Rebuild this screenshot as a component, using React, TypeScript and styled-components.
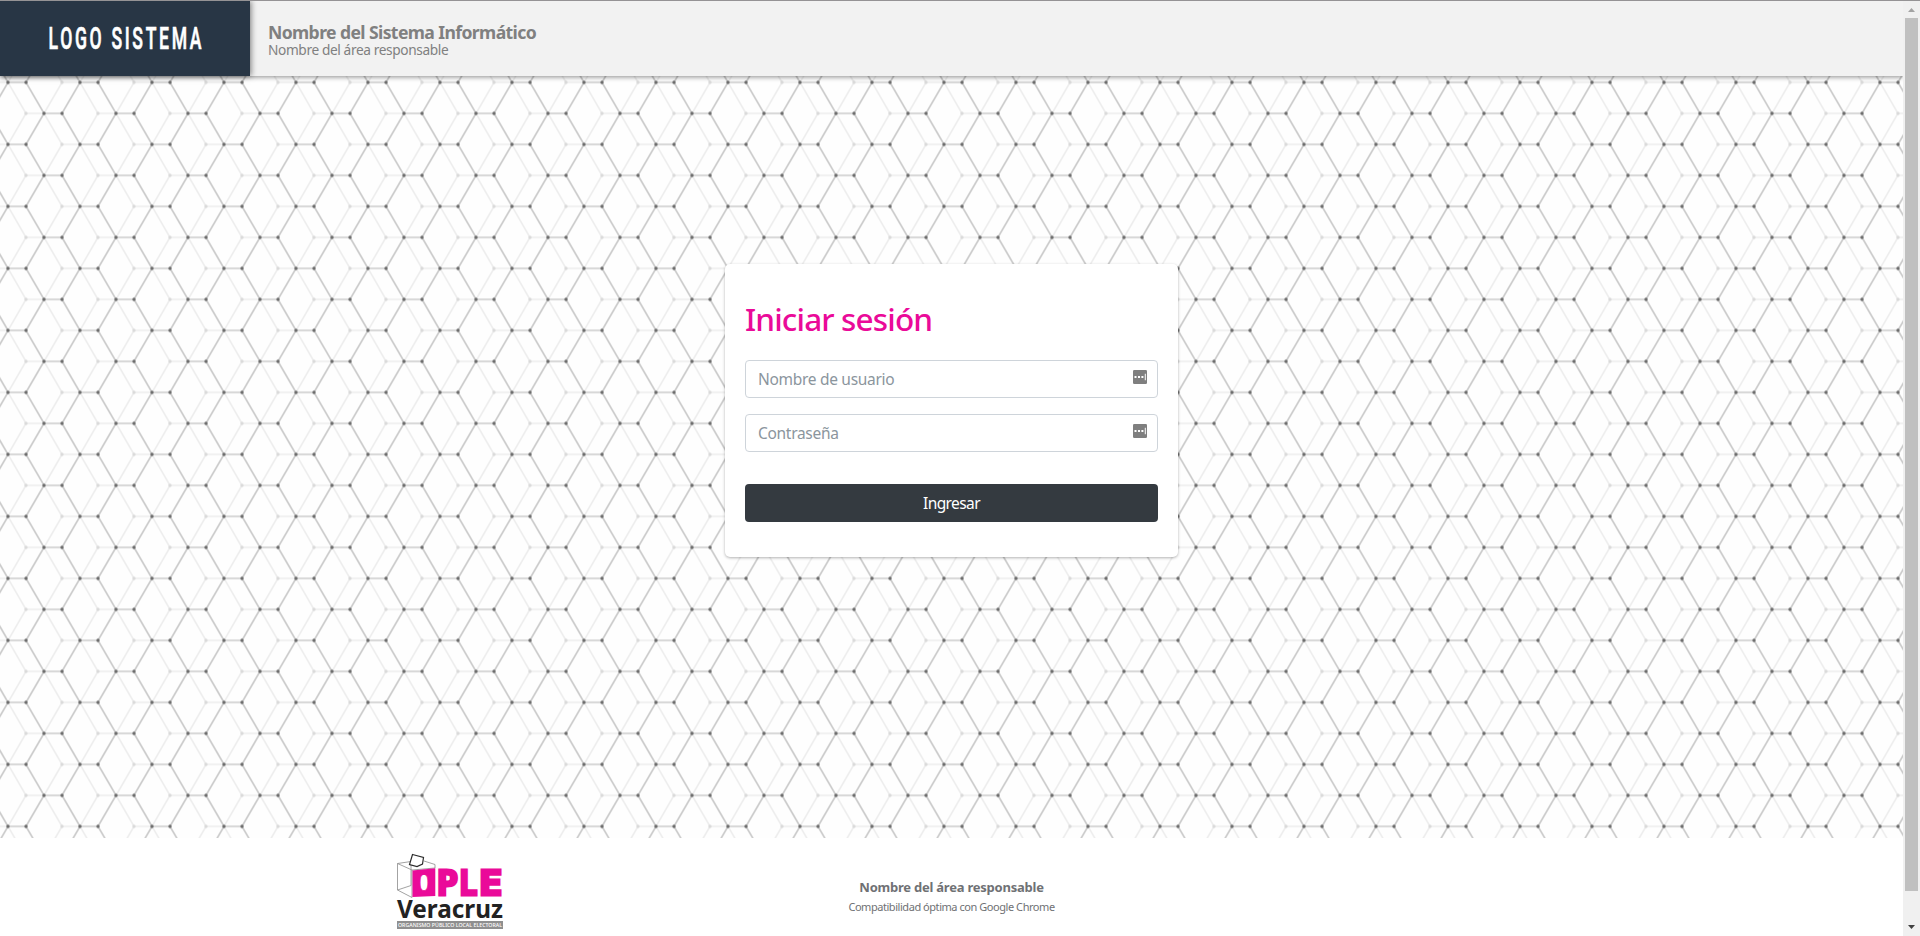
import React from "react";
import styled, { createGlobalStyle } from "styled-components";

const GlobalStyle = createGlobalStyle`
  * { box-sizing: border-box; }
  html, body { margin: 0; padding: 0; overflow: hidden; }
  body { font-family: "Noto Sans", "Open Sans", sans-serif; background: #fff; }
`;

const Window = styled.div`
  display: grid;
  grid-template-columns: 1fr 17px;
  width: 1920px;
  height: 936px;
  border-top: 1px solid #959395;
`;

const Page = styled.div`
  display: flex;
  flex-direction: column;
  min-width: 0;
  overflow: hidden;
`;

const Header = styled.header`
  position: relative;
  z-index: 1;
  display: flex;
  height: 75px;
  background: #f2f2f2;
  box-shadow: 0 1px 5px rgba(0, 0, 0, 0.45);
`;

const Brand = styled.div`
  display: flex;
  align-items: center;
  justify-content: center;
  width: 250px;
  background: #283645;
  box-shadow: 1px 0 6px rgba(0, 0, 0, 0.5);
`;

const HeaderText = styled.div`
  padding: 19px 0 0 18px;
  color: #808080;
`;

const Line = styled.div<{ $size: number; $height: number; $spacing?: number; $weight?: number }>`
  font-size: ${(p) => p.$size}px;
  line-height: ${(p) => p.$height}px;
  letter-spacing: ${(p) => p.$spacing ?? 0}px;
  font-weight: ${(p) => p.$weight ?? 400};
  white-space: nowrap;
`;

const Main = styled.main`
  position: relative;
  display: flex;
  justify-content: center;
  align-items: flex-start;
  height: 762px;
  padding-top: 188px;
  overflow: hidden;
`;

const Backdrop = styled.svg`
  position: absolute;
  inset: 0;
  width: 100%;
  height: 100%;
`;

const Card = styled.form`
  position: relative;
  display: flex;
  flex-direction: column;
  width: 453px;
  height: 293px;
  padding: 31px 20px 0;
  border-radius: 5px;
  background: #fff;
  box-shadow: 0 1px 3px rgba(0, 0, 0, 0.3);
`;

const Title = styled.h1`
  margin: 0 0 18px;
  color: #ea0a99;
  font-size: 31.5px;
  font-weight: 500;
  line-height: 47px;
  letter-spacing: -0.85px;
  white-space: nowrap;
`;

const Field = styled.div`
  display: flex;
  height: 38px;
  margin-bottom: 16px;
  padding-right: 10px;
  border: 1px solid #ced4da;
  border-radius: 4px;
  background: #fff;
`;

const Input = styled.input`
  flex: 1;
  min-width: 0;
  padding: 0 12px;
  border: 0;
  outline: 0;
  background: transparent;
  font: 400 15.5px "Noto Sans", sans-serif;
  letter-spacing: -0.3px;
  &::placeholder { color: #8b959d; opacity: 1; }
`;

const KeyIcon = styled.svg`
  width: 14px;
  height: 14px;
  margin-top: 9px;
`;

const Submit = styled.button`
  height: 38px;
  margin-top: 16px;
  padding: 0;
  border: 0;
  border-radius: 4px;
  background: #343a40;
  color: #fff;
  font: 400 15.5px "Noto Sans", sans-serif;
  letter-spacing: -0.6px;
`;

const Footer = styled.footer`
  display: grid;
  grid-template-columns: 849px 205px;
  height: 98px;
  background: #fff;
`;

const Institution = styled.svg`
  width: 112px;
  height: 83px;
  margin: 15px 0 0 394px;
`;

const FooterText = styled.div`
  padding-top: 38px;
  display: flex;
  flex-direction: column;
  align-items: center;
  color: #6f7174;
`;

const ScrollTrack = styled.div`
  display: flex;
  flex-direction: column;
  align-items: center;
  justify-content: space-between;
  background: #f0f0f0;
`;

const Arrow = styled.svg`
  width: 17px;
  height: 17px;
`;

const Thumb = styled.div`
  width: 13px;
  height: 873px;
  margin-bottom: 28px;
  background: #c0c0c0;
`;

const PasswordIcon = () => (
  <KeyIcon viewBox="0 0 14 14">
    <rect width="14" height="14" rx="1.3" fill="#7f7f7f" />
    <path d="M1.5 6h2v2h-2zM5 6h2v2H5zM8.4 6h2v2h-2zM11.8 3.7h1v6.6h-1z" fill="#fff" />
  </KeyIcon>
);

const HexBackdrop = () => (
  <Backdrop>
    <defs>
      <pattern id="hex" x="8" y="6.4" width="72" height="62" patternUnits="userSpaceOnUse">
        <g fill="none" stroke="#ededed" strokeWidth="1.6">
          <path d="M54 0H72M18 31H36M54 0L36 31L54 62M0 0L18 31L0 62M54 62H72" />
        </g>
        <g fill="none" stroke="#cbcbcb" strokeWidth="1.7">
          <path d="M0 0H18L36 31H54L72 0M0 62H18L36 31M54 31L72 62" />
        </g>
        <g fill="#dadada">
          <circle cx="54" cy="0" r="1.7" />
          <circle cx="54" cy="62" r="1.7" />
          <circle cx="18" cy="31" r="1.7" />
        </g>
        <g fill="#6c6c6c">
          <circle cx="0" cy="0" r="1.7" />
          <circle cx="72" cy="0" r="1.7" />
          <circle cx="0" cy="62" r="1.7" />
          <circle cx="72" cy="62" r="1.7" />
          <circle cx="18" cy="0" r="1.7" />
          <circle cx="18" cy="62" r="1.7" />
          <circle cx="36" cy="31" r="1.7" />
          <circle cx="54" cy="31" r="1.7" />
        </g>
      </pattern>
    </defs>
    <rect width="100%" height="100%" fill="#fefefe" />
    <rect width="100%" height="100%" fill="url(#hex)" />
  </Backdrop>
);

const opleLetters = [
  { char: "O", x: 19, width: 22, stroke: 0.6 },
  { char: "P", x: 43, width: 21, stroke: 2.8 },
  { char: "L", x: 64.5, width: 19, stroke: 2.8 },
  { char: "E", x: 85, width: 23.5, stroke: 2.8 },
];

const InstitutionLogo = () => (
  <Institution viewBox="0 0 112 83">
    <g fill="none" stroke="#8b8b8b" strokeWidth="0.8">
      <path d="M3.5 10.5L18 17V44.5L3.5 37ZM3.5 10.5L17 8.5M30 8L41 11.5V15L18 17M3.5 37L17 32.5M17 8.5V32.5" />
    </g>
    <path d="M18.5 1.5L29.5 4.5L28.5 11L23 13.5L15.5 11.5Z" fill="#fff" stroke="#2b2b2b" strokeWidth="1.2" />
    {/* Front face of the ballot box, framing the first letter */}
    <path d="M21 19.7L38.8 18.1V40.6L21 41.4Z" fill="none" stroke="#ea0a99" strokeWidth="5" />
    <g fill="#ea0a99" stroke="#ea0a99" fontFamily="DejaVu Sans Mono" fontWeight="700" fontSize="33.5">
      {opleLetters.map((l) => (
        <text key={l.char} x={l.x} y="42.2" strokeWidth={l.stroke} textLength={l.width} lengthAdjust="spacingAndGlyphs">
          {l.char}
        </text>
      ))}
    </g>
    <text x="3" y="64.5" fill="#222" fontFamily="Noto Sans" fontWeight="700" fontSize="24.5" textLength="106" lengthAdjust="spacingAndGlyphs">
      Veracruz
    </text>
    <rect x="3" y="68" width="106" height="8" fill="#8f8f8f" />
    <text x="4" y="74" fill="#fff" fontFamily="Noto Sans" fontWeight="500" fontSize="5.6" textLength="104" lengthAdjust="spacingAndGlyphs">
      ORGANISMO PÚBLICO LOCAL ELECTORAL
    </text>
  </Institution>
);

const SystemLogo = () => (
  <svg width="160" height="40" viewBox="0 0 160 40">
    <g transform="translate(3.6 29.7) scale(.55 1)">
      <text fill="#fff" stroke="#fff" strokeWidth="0.7" fontFamily="Roboto" fontWeight="500" fontSize="32" textLength="278">
        LOGO SISTEMA
      </text>
    </g>
  </svg>
);

export default function App() {
  return (
    <>
      <GlobalStyle />
      <Window>
        <Page>
          <Header>
            <Brand>
              <SystemLogo />
            </Brand>
            <HeaderText>
              <Line $size={17.6} $height={24} $weight={700} $spacing={-0.61}>Nombre del Sistema Informático</Line>
              <Line $size={13.7} $height={11} $spacing={-0.38}>Nombre del área responsable</Line>
            </HeaderText>
          </Header>
          <Main>
            <HexBackdrop />
            <Card onSubmit={(e) => e.preventDefault()}>
              <Title>Iniciar sesión</Title>
              <Field>
                <Input placeholder="Nombre de usuario" />
                <PasswordIcon />
              </Field>
              <Field>
                <Input type="password" placeholder="Contraseña" />
                <PasswordIcon />
              </Field>
              <Submit type="submit">Ingresar</Submit>
            </Card>
          </Main>
          <Footer>
            <InstitutionLogo />
            <FooterText>
              <Line $size={13} $height={22} $weight={700} $spacing={-0.23}>Nombre del área responsable</Line>
              <Line $size={11} $height={18} $spacing={-0.45}>Compatibilidad óptima con Google Chrome</Line>
            </FooterText>
          </Footer>
        </Page>
        <ScrollTrack>
          <Arrow viewBox="0 0 17 17">
            <path d="M5 11L8.5 7L12 11Z" fill="#a3a3a3" />
          </Arrow>
          <Thumb />
          <Arrow viewBox="0 0 17 17">
            <path d="M5 6L8.5 10L12 6Z" fill="#404040" />
          </Arrow>
        </ScrollTrack>
      </Window>
    </>
  );
}
